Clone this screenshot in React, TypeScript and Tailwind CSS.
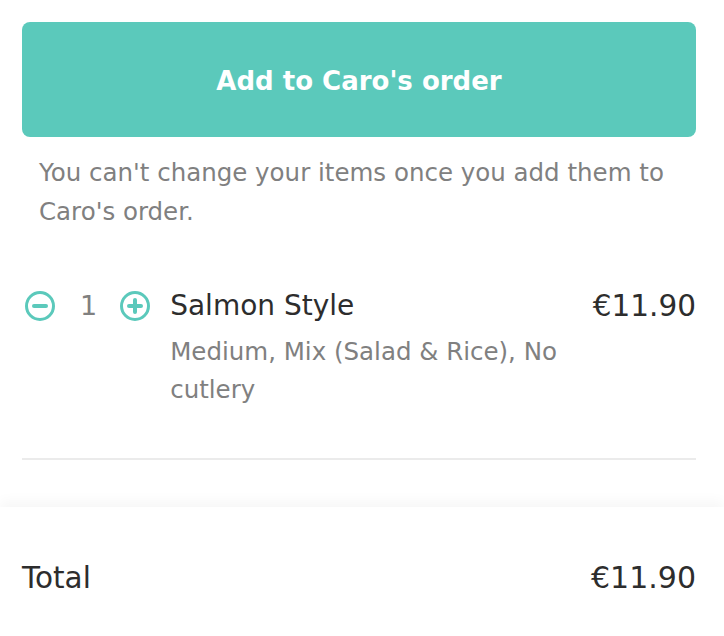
import React from "react";

function MinusIcon() {
  return (
    <svg width="32" height="32" viewBox="0 0 32 32" fill="none">
      <circle cx="16" cy="16" r="13.5" stroke="#5BC9BB" strokeWidth="3" />
      <line x1="10" y1="16" x2="22" y2="16" stroke="#5BC9BB" strokeWidth="4" strokeLinecap="round" />
    </svg>
  );
}

function PlusIcon() {
  return (
    <svg width="32" height="32" viewBox="0 0 32 32" fill="none">
      <circle cx="16" cy="16" r="13.5" stroke="#5BC9BB" strokeWidth="3" />
      <line x1="10" y1="16" x2="22" y2="16" stroke="#5BC9BB" strokeWidth="4" strokeLinecap="round" />
      <line x1="16" y1="10" x2="16" y2="22" stroke="#5BC9BB" strokeWidth="4" strokeLinecap="round" />
    </svg>
  );
}

export default function App() {
  return (
    <div
      className="w-full h-[636px] flex flex-col bg-white overflow-hidden"
      style={{ fontFamily: "'DejaVu Sans', 'Open Sans', sans-serif" }}
    >
      <div className="pl-[22px] pr-[28px] pt-[22px] flex-1 flex flex-col">
        <button className="w-full h-[115px] pt-[4px] rounded-[8px] bg-[#5BC9BB] text-white text-[26px] font-bold flex items-center justify-center">
          Add to Caro's order
        </button>
        <p className="mt-[16px] pl-[17px] pr-[8px] text-[24.5px] leading-[39px] text-[#808080]">
          You can't change your items once you add them to Caro's order.
        </p>
        <div className="mt-[54px] flex items-start">
          <div className="flex items-center h-[42px] ml-[2px]">
            <MinusIcon />
            <span className="ml-[24px] mr-[22px] text-[27px] text-[#808080]">1</span>
            <PlusIcon />
          </div>
          <div className="ml-[19px] flex-1 min-w-0 pr-[20px]">
            <div className="text-[28px] leading-[42px] text-[#2d2d2d]">Salmon Style</div>
            <div className="mt-[6px] text-[24.5px] leading-[38px] text-[#808080]">
              Medium, Mix (Salad &amp; Rice), No cutlery
            </div>
          </div>
          <div className="text-[29.5px] leading-[42px] text-[#2d2d2d] shrink-0">€11.90</div>
        </div>
        <div className="mt-[49px] h-[2px] bg-[#ebebeb]" />
      </div>
      <div className="h-[129px] shrink-0 pl-[22px] pr-[28px] pt-[51px] flex justify-between bg-white shadow-[0_-6px_12px_rgba(0,0,0,0.035)]">
        <span className="text-[29.5px] leading-[40px] text-[#2d2d2d]">Total</span>
        <span className="text-[30px] leading-[40px] text-[#2d2d2d]">€11.90</span>
      </div>
    </div>
  );
}
